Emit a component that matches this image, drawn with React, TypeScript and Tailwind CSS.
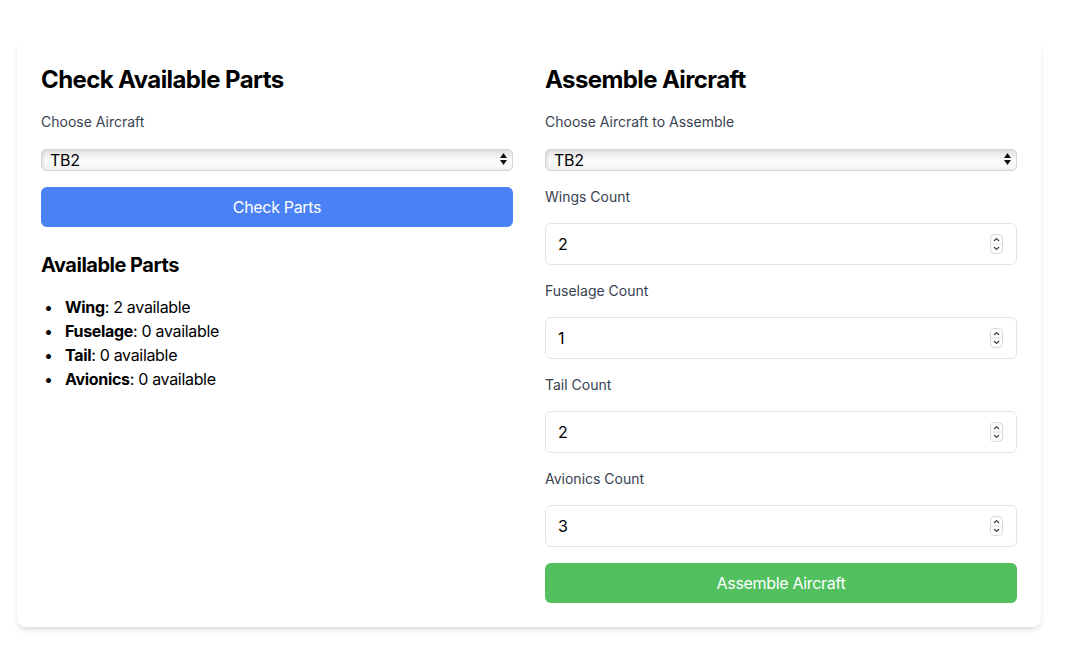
import { useState } from "react";

const parts = [
  { name: "Wing", count: 2 },
  { name: "Fuselage", count: 0 },
  { name: "Tail", count: 0 },
  { name: "Avionics", count: 0 },
];

function SelectBox({ value }: { value: string }) {
  return (
    <div className="relative h-[22px] w-full">
      <select
        defaultValue={value}
        className="h-[22px] w-full appearance-none rounded-[5px] border border-[#d4d4d4] bg-gradient-to-b from-[#e2e2e2] via-[#fbfbfb] to-[#f3f3f3] pl-[8px] text-[16px] leading-[20px] tracking-[-0.02em] text-black shadow-[inset_2px_0_2px_rgba(0,0,0,0.08)] outline-none"
      >
        <option>TB2</option>
        <option>AKINCI</option>
        <option>KIZILELMA</option>
      </select>
      <svg
        className="pointer-events-none absolute right-[6px] top-[5px]"
        width="7"
        height="12"
        viewBox="0 0 7 12"
      >
        <path d="M3.5 0 L7 5 L0 5 Z" fill="#111" />
        <path d="M0 7 L7 7 L3.5 12 Z" fill="#111" />
      </svg>
    </div>
  );
}

function CountInput({ label, value }: { label: string; value: number }) {
  const [v, setV] = useState(String(value));
  return (
    <>
      <label className="text-sm text-[#374151]">{label}</label>
      <div className="relative">
        <input
          type="text"
          value={v}
          onChange={(e) => setV(e.target.value)}
          className="h-[42px] w-full rounded-md border border-[#e3e4e8] px-3 text-base text-black outline-none"
        />
        <svg
          className="pointer-events-none absolute right-[14px] top-[11px]"
          width="13"
          height="20"
          viewBox="0 0 13 20"
        >
          <rect x="0.5" y="0.5" width="12" height="19" rx="4" fill="#fff" stroke="#d6d6d6" />
          <line x1="1" y1="10" x2="12" y2="10" stroke="#e0e0e0" />
          <path d="M4 7 L6.5 4.5 L9 7" fill="none" stroke="#444" strokeWidth="1.2" />
          <path d="M4 13 L6.5 15.5 L9 13" fill="none" stroke="#444" strokeWidth="1.2" />
        </svg>
      </div>
    </>
  );
}

export default function App() {
  return (
    <div className="min-h-screen bg-white pt-10 font-['Inter',sans-serif] text-black">
      <div className="ml-[17px] w-[1024px] rounded-lg bg-white p-6 shadow-md">
        <div className="grid grid-cols-2 gap-8">
          {/* 부품 조회 */}
          <div className="flex flex-col">
            <h2 className="mb-4 text-2xl font-bold tracking-tight">Check Available Parts</h2>
            <label className="mb-4 text-sm text-[#374151]">Choose Aircraft</label>
            <SelectBox value="TB2" />
            <button className="mt-[17px] h-10 w-full rounded-md bg-[#4a81f4] text-base tracking-[-0.02em] text-white">
              Check Parts
            </button>
            <h3 className="mt-6 mb-4 text-xl font-bold tracking-tight">Available Parts</h3>
            <ul className="text-base leading-6 tracking-[-0.02em]">
              {parts.map((p) => (
                <li key={p.name} className="flex">
                  <span className="w-6 pl-[3px]">•</span>
                  <span>
                    <strong>{p.name}</strong>: {p.count} available
                  </span>
                </li>
              ))}
            </ul>
          </div>

          {/* 항공기 조립 */}
          <div className="flex flex-col gap-4">
            <h2 className="text-2xl font-bold tracking-tight">Assemble Aircraft</h2>
            <label className="text-sm text-[#374151]">Choose Aircraft to Assemble</label>
            <div className="mb-[1px]">
              <SelectBox value="TB2" />
            </div>
            <CountInput label="Wings Count" value={2} />
            <CountInput label="Fuselage Count" value={1} />
            <CountInput label="Tail Count" value={2} />
            <CountInput label="Avionics Count" value={3} />
            <button className="h-10 w-full rounded-md bg-[#52c05f] text-base tracking-[-0.02em] text-white">
              Assemble Aircraft
            </button>
          </div>
        </div>
      </div>
    </div>
  );
}
